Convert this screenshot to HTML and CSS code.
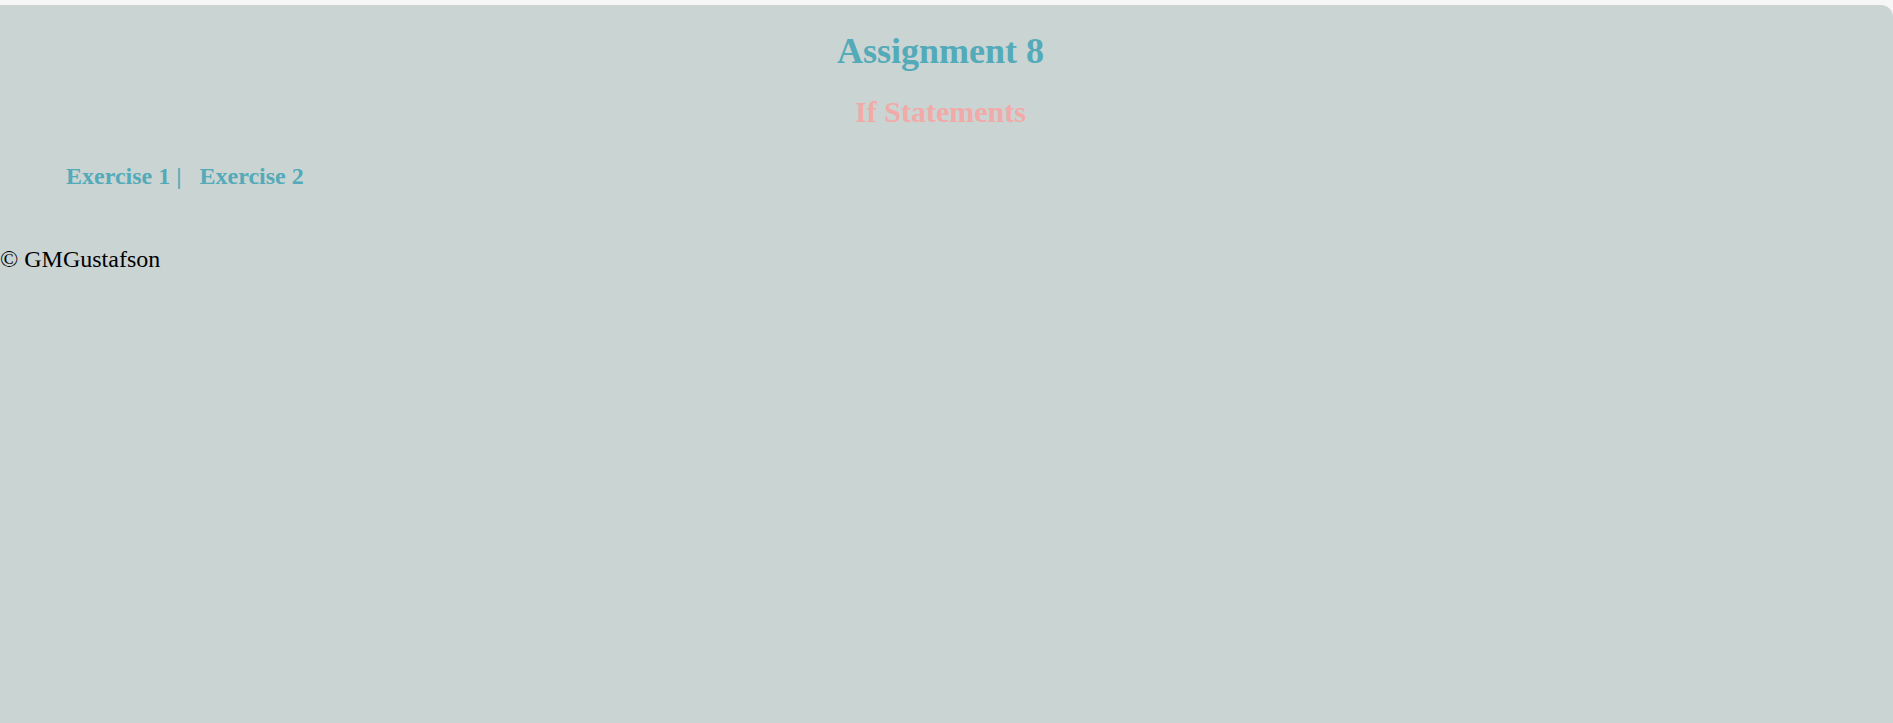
FILE: index.html
```html
<!DOCTYPE html>
<html lang="en">
<head>
<meta charset="utf-8">
<title>Assignment 8</title>
<link rel="stylesheet" href="styles.css">
</head>
<body>
<div class="page">
  <header class="header">
    <h1 class="title">Assignment 8</h1>
    <h2 class="subtitle">If Statements</h2>
  </header>
  <nav class="nav">
    <a class="nav-link" href="#">Exercise 1</a><span class="sep">|</span><a class="nav-link" href="#">Exercise 2</a>
  </nav>
  <footer class="footer">© GMGustafson</footer>
</div>
</body>
</html>
```
FILE: styles.css
```css
html, body {
  margin: 0;
  padding: 0;
  height: 100%;
}
body {
  background: #f6f6f6;
  font-family: "Liberation Serif", "Times New Roman", serif;
  padding-top: 5px;
  box-sizing: border-box;
}
.page {
  background: #cad4d3;
  border-top-right-radius: 12px;
  min-height: 100%;
  box-sizing: border-box;
  padding-top: 1px;
}
.header {
  text-align: center;
  padding-right: 12px;
}
.title {
  font-size: 36px;
  font-weight: bold;
  color: #53aab8;
  margin: 25px 0 0;
  line-height: 41px;
}
.subtitle {
  font-size: 30px;
  font-weight: bold;
  color: #f2aaa8;
  margin: 23px 0 0;
  line-height: 34px;
}
.nav {
  padding-left: 66px;
  margin-top: 33px;
  font-size: 24px;
  font-weight: bold;
  color: #53aab8;
  line-height: 28px;
}
.nav-link {
  color: #53aab8;
  text-decoration: none;
}
.sep {
  margin: 0 18px 0 6px;
}
.footer {
  margin-top: 55px;
  font-size: 24px;
  line-height: 28px;
  color: #000;
}
```
